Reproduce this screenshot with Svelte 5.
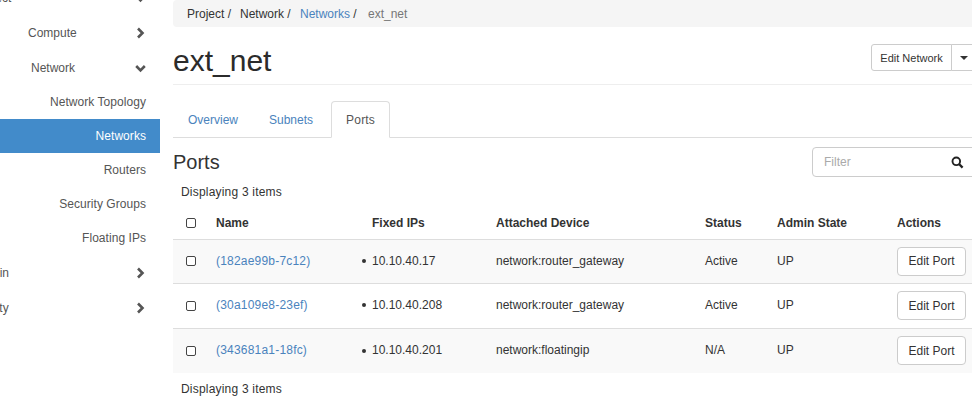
<script>
  const subnav = ['Network Topology', 'Networks', 'Routers', 'Security Groups', 'Floating IPs'];

  const ports = [
    { name: '(182ae99b-7c12)', ip: '10.10.40.17', device: 'network:router_gateway', status: 'Active', admin: 'UP' },
    { name: '(30a109e8-23ef)', ip: '10.10.40.208', device: 'network:router_gateway', status: 'Active', admin: 'UP' },
    { name: '(343681a1-18fc)', ip: '10.10.40.201', device: 'network:floatingip', status: 'N/A', admin: 'UP' }
  ];
</script>

{#snippet chevron(down)}
  <svg class="chev" width="14" height="14" viewBox="0 0 14 14">
    {#if down}
      <path d="M4.2 5 L8.5 9.3 L12.8 5" />
    {:else}
      <path d="M6 2.5 L10.5 7 L6 11.5" />
    {/if}
  </svg>
{/snippet}

<div class="page">
  <nav class="sidebar">
    <div class="top project"><span>Project</span>{@render chevron(true)}</div>
    <div class="top compute"><span>Compute</span>{@render chevron(false)}</div>
    <div class="top network"><span>Network</span>{@render chevron(true)}</div>
    {#each subnav as item}
      <a class="sub" class:active={item === 'Networks'} href="#top">{item}</a>
    {/each}
    <div class="top admin"><span>Admin</span>{@render chevron(false)}</div>
    <div class="top identity"><span>Identity</span>{@render chevron(false)}</div>
  </nav>

  <main>
    <ol class="crumbs">
      <li class="c1">Project /</li>
      <li class="c2">Network /</li>
      <li class="c3"><a href="#top">Networks</a> /</li>
      <li class="current">ext_net</li>
    </ol>

    <header class="title">
      <h1>ext_net</h1>
      <div class="btn-group">
        <button>Edit Network</button>
        <button class="caret-btn" aria-label="More"><i class="caret"></i></button>
      </div>
    </header>

    <ul class="tabs">
      <li><a href="#top">Overview</a></li>
      <li><a href="#top">Subnets</a></li>
      <li class="active"><a href="#top">Ports</a></li>
    </ul>

    <div class="ports-head">
      <h3>Ports</h3>
      <div class="filter">
        <span>Filter</span>
        <svg width="13" height="13" viewBox="0 0 13 13">
          <circle cx="5.3" cy="5.3" r="3.8" fill="none" stroke="#222" stroke-width="1.9" />
          <path d="M8 8 L11.6 11.6" stroke="#222" stroke-width="2.3" />
        </svg>
      </div>
    </div>

    <div class="count">Displaying 3 items</div>

    <table>
      <colgroup>
        <col class="w-check" /><col class="w-name" /><col class="w-ip" /><col class="w-dev" />
        <col class="w-status" /><col class="w-admin" /><col class="w-act" />
      </colgroup>
      <thead>
        <tr>
          <th class="check"><input type="checkbox" /></th>
          <th>Name</th>
          <th>Fixed IPs</th>
          <th>Attached Device</th>
          <th>Status</th>
          <th>Admin State</th>
          <th>Actions</th>
        </tr>
      </thead>
      <tbody>
        {#each ports as port}
          <tr>
            <td class="check"><input type="checkbox" /></td>
            <td class="text"><a class="port-link" href="#top">{port.name}</a></td>
            <td class="text"><ul class="ips"><li>{port.ip}</li></ul></td>
            <td class="text">{port.device}</td>
            <td class="text">{port.status}</td>
            <td class="text">{port.admin}</td>
            <td><button class="edit">Edit Port</button></td>
          </tr>
        {/each}
      </tbody>
    </table>

    <div class="count foot">Displaying 3 items</div>
  </main>
</div>

<style>
  :global(body) {
    margin: 0;
    background: #fff;
  }

  .page {
    display: flex;
    width: 972px;
    height: 405px;
    overflow: hidden;
    font-family: "Liberation Sans", Arial, sans-serif;
    font-size: 12px;
    color: #333;
  }

  a {
    color: #4a83bd;
    text-decoration: none;
  }

  /* sidebar */
  .sidebar {
    flex: 0 0 160px;
    width: 160px;
    margin-top: -20px;
    overflow: hidden;
    color: #555;
  }
  .top {
    display: flex;
    align-items: center;
    height: 35px;
  }
  .top .chev {
    margin-left: auto;
    margin-right: 14px;
  }
  .project span { margin-left: -26px; }
  .compute span { margin-left: 28px; }
  .network span { margin-left: 31px; }
  .admin span { margin-left: -25px; }
  .identity span { margin-left: -30px; }

  .chev path {
    fill: none;
    stroke: #555;
    stroke-width: 2.6;
  }
  .sub {
    display: block;
    height: 34px;
    line-height: 34px;
    padding-right: 14px;
    text-align: right;
    letter-spacing: 0.05px;
    color: #555;
  }
  .sub.active {
    background: #428bca;
    color: #fff;
  }

  /* main column */
  main {
    flex: 1;
    min-width: 0;
    margin-left: 13px;
  }
  .crumbs {
    display: flex;
    height: 27px;
    align-items: center;
    margin: 0;
    padding: 0 0 0 14px;
    list-style: none;
    background: #f5f5f5;
    border-radius: 4px 0 0 4px;
  }
  .c1 { width: 53px; }
  .c2 { width: 60px; }
  .c3 { width: 68px; }
  .current { color: #777; }

  .title {
    display: flex;
    justify-content: space-between;
    align-items: flex-start;
    height: 57px;
    border-bottom: 1px solid #eee;
  }
  h1 {
    margin: 16px 0 0;
    font-size: 30px;
    font-weight: 400;
    line-height: 36px;
    color: #2b2b2b;
  }
  .btn-group {
    display: flex;
    margin: 17px -6px 0 0;
  }
  button {
    font: inherit;
    color: #333;
    background: #fff;
    border: 1px solid #ccc;
    border-radius: 3px;
    padding: 0;
  }
  .btn-group button {
    width: 81px;
    height: 27px;
    font-size: 11px;
    border-radius: 3px 0 0 3px;
  }
  .btn-group .caret-btn {
    width: 27px;
    margin-left: -1px;
    border-radius: 0 3px 3px 0;
    text-align: left;
    padding-left: 8px;
  }
  .caret {
    display: block;
    width: 0;
    height: 0;
    border-top: 4px solid #333;
    border-left: 4px solid transparent;
    border-right: 4px solid transparent;
  }

  .tabs {
    display: flex;
    height: 36px;
    margin: 16px 0 0;
    padding: 0;
    list-style: none;
    border-bottom: 1px solid #ddd;
  }
  .tabs li:nth-child(1) {
    margin-right: 1px;
  }
  .tabs li:nth-child(2) {
    margin-right: 3px;
  }
  .tabs a {
    display: block;
    box-sizing: border-box;
    height: 37px;
    line-height: 37px;
    padding: 0 14px;
    border: 1px solid transparent;
    border-radius: 4px 4px 0 0;
  }
  .tabs .active a {
    color: #555;
    background: #fff;
    border-color: #ddd #ddd #fff;
    letter-spacing: 0.2px;
  }

  .ports-head {
    display: flex;
    justify-content: space-between;
    align-items: flex-start;
    height: 42px;
  }
  h3 {
    margin: 12px 0 0;
    font-size: 20px;
    font-weight: 400;
    line-height: 24px;
  }
  .filter {
    box-sizing: border-box;
    display: flex;
    align-items: center;
    justify-content: space-between;
    width: 166px;
    height: 30px;
    margin: 9px -6px 0 0;
    padding: 0 13px 0 11px;
    border: 1px solid #ccc;
    border-radius: 4px;
    color: #aaa;
  }

  .count {
    height: 24px;
    line-height: 24px;
    padding-left: 8px;
    letter-spacing: 0.2px;
  }
  .count.foot {
    margin-top: 4px;
  }

  table {
    table-layout: fixed;
    border-collapse: collapse;
    width: 799px;
  }
  .w-check { width: 35px; }
  .w-name { width: 156px; }
  .w-ip { width: 124px; }
  .w-dev { width: 209px; }
  .w-status { width: 72px; }
  .w-admin { width: 120px; }
  .w-act { width: 83px; }

  th {
    box-sizing: border-box;
    height: 35px;
    padding: 3px 8px 0;
    text-align: left;
    font-weight: 700;
    border-bottom: 1px solid #ddd;
  }
  td {
    box-sizing: border-box;
    height: 45px;
    padding: 0 8px;
    border-bottom: 1px solid #ddd;
  }
  td.text {
    padding-bottom: 1px;
  }
  tbody tr:first-child td {
    height: 44px;
  }
  tbody tr:nth-child(odd) {
    background: #f9f9f9;
  }
  tbody tr:last-child td {
    border-bottom: 0;
  }
  th.check {
    padding: 3px 0 0 13px;
  }
  td.check {
    padding: 0 0 0 13px;
  }
  .port-link {
    letter-spacing: 0.2px;
  }
  input[type="checkbox"] {
    appearance: none;
    display: block;
    box-sizing: border-box;
    width: 10px;
    height: 10px;
    margin: 0;
    background: #fff;
    border: 1px solid #444;
    border-radius: 2px;
  }
  .ips {
    margin: 0;
    padding: 0;
    list-style: none;
  }
  .ips li::before {
    content: "";
    display: inline-block;
    width: 4px;
    height: 4px;
    margin: 0 6px 1px -10px;
    vertical-align: middle;
    border-radius: 50%;
    background: #333;
  }
  .edit {
    width: 69px;
    height: 29px;
    display: block;
    border-radius: 4px;
  }
</style>
